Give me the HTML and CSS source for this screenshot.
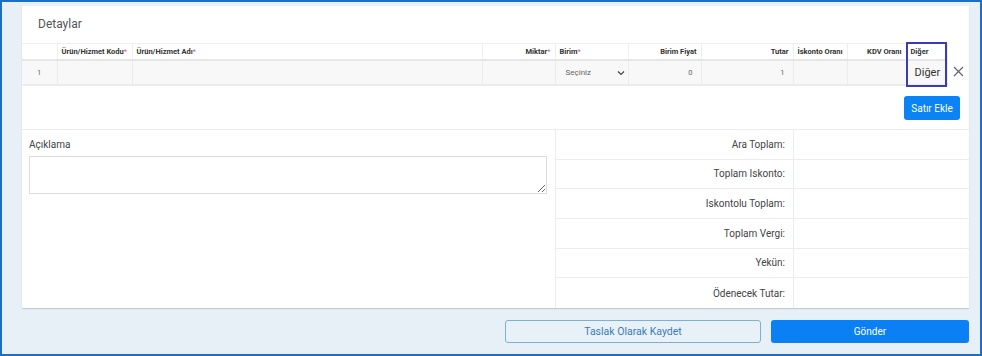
FILE: index.html
```html
<!DOCTYPE html>
<html lang="tr">
<head>
    <meta charset="UTF-8">
    <meta name="viewport" content="width=device-width, initial-scale=1.0">
    <title>Detaylar</title>
    <link rel="stylesheet" href="styles.css">
</head>
<body>

    <div class="frame">
        <div class="card">
            <div class="card-title">Detaylar</div>

            <div class="table-wrap">
                <table class="items">
                    <colgroup>
                        <col class="c-no">
                        <col class="c-code">
                        <col class="c-name">
                        <col class="c-qty">
                        <col class="c-unit">
                        <col class="c-price">
                        <col class="c-total">
                        <col class="c-disc">
                        <col class="c-vat">
                        <col class="c-other">
                        <col class="c-del">
                    </colgroup>
                    <thead>
                        <tr>
                            <th></th>
                            <th>Ürün/Hizmet Kodu<span class="req">*</span></th>
                            <th>Ürün/Hizmet Adı<span class="req">*</span></th>
                            <th class="right">Miktar<span class="req">*</span></th>
                            <th>Birim<span class="req">*</span></th>
                            <th class="right">Birim Fiyat</th>
                            <th class="right">Tutar</th>
                            <th>İskonto Oranı</th>
                            <th class="right">KDV Oranı</th>
                            <th>Diğer</th>
                            <th class="del"></th>
                        </tr>
                    </thead>
                    <tbody>
                        <tr>
                            <td class="no">1</td>
                            <td></td>
                            <td></td>
                            <td></td>
                            <td class="unit">
                                <div class="select">
                                    <span>Seçiniz</span>
                                    <svg width="8" height="6" viewBox="0 0 8 6"><path d="M1 1.5 L4 4.5 L7 1.5" fill="none" stroke="#444" stroke-width="1.2"/></svg>
                                </div>
                            </td>
                            <td class="right">0</td>
                            <td class="right">1</td>
                            <td></td>
                            <td></td>
                            <td class="other">Diğer</td>
                            <td class="del">
                                <svg width="11" height="11" viewBox="0 0 11 11"><path d="M1 1 L10 10 M10 1 L1 10" stroke="#666" stroke-width="1.2"/></svg>
                            </td>
                        </tr>
                    </tbody>
                </table>
                <div class="highlight"></div>
            </div>

            <div class="add-row">
                <button class="btn-add">Satır Ekle</button>
            </div>

            <div class="bottom">
                <div class="note">
                    <label for="note">Açıklama</label>
                    <textarea id="note"></textarea>
                </div>
                <div class="totals">
                    <div class="t-label">Ara Toplam:</div><div class="t-value"></div>
                    <div class="t-label">Toplam Iskonto:</div><div class="t-value"></div>
                    <div class="t-label">Iskontolu Toplam:</div><div class="t-value"></div>
                    <div class="t-label">Toplam Vergi:</div><div class="t-value"></div>
                    <div class="t-label">Yekün:</div><div class="t-value"></div>
                    <div class="t-label">Ödenecek Tutar:</div><div class="t-value"></div>
                </div>
            </div>
        </div>

        <div class="actions">
            <button class="btn-draft">Taslak Olarak Kaydet</button>
            <button class="btn-send">Gönder</button>
        </div>
    </div>

</body>
</html>
```

FILE: styles.css
```css
body {
    font-family: Roboto, "Liberation Sans", Arial, sans-serif;
    margin: 0;
    color: #333;
}
.frame {
    box-sizing: border-box;
    width: 982px;
    height: 356px;
    border: 2px solid #1b6fc4;
    background-color: #e7eff7;
    padding: 4px 11px 0 20px;
}
.card {
    background: white;
    width: 947px;
    height: 302px;
    box-shadow: 0 1px 1px rgba(0,0,0,0.15);
    display: flex;
    flex-direction: column;
}
.card-title {
    height: 37px;
    box-sizing: border-box;
    padding: 11px 0 0 16px;
    font-size: 12px;
    color: #555;
}
.table-wrap {
    position: relative;
}
.items {
    border-collapse: collapse;
    table-layout: fixed;
    width: 947px;
}
.c-no { width: 35px; }
.c-code { width: 75px; }
.c-name { width: 350px; }
.c-qty { width: 73px; }
.c-unit { width: 73px; }
.c-price { width: 73px; }
.c-total { width: 92px; }
.c-disc { width: 54px; }
.c-vat { width: 59px; }
.c-other { width: 41px; }
.c-del { width: 22px; }
.items th {
    height: 15px;
    padding: 0 4px;
    font-size: 7.5px;
    font-weight: 700;
    color: #333;
    text-align: left;
    white-space: nowrap;
    border: 1px solid #efefef;
    border-bottom: 2px solid #e6e6e6;
}
.items td {
    height: 23px;
    padding: 0 8px;
    font-size: 7.5px;
    color: #666;
    background: #f8f8f8;
    border: 1px solid #ececec;
    border-bottom: 2px solid #ececec;
}
.items th:first-child, .items td:first-child {
    border-left: none;
}
.items .right {
    text-align: right;
}
.items .no {
    padding-left: 15px;
}
.items td.unit {
    padding-right: 3px;
}
.items th.del, .items td.del {
    border: none;
    background: white;
    padding: 0;
    text-align: center;
}
.items td.other {
    font-size: 11px;
    color: #333;
    padding-left: 8px;
}
.req {
    color: #e4576a;
    font-weight: 400;
}
.select {
    display: flex;
    align-items: center;
    justify-content: space-between;
    font-size: 8px;
    color: #666;
    padding-left: 2px;
}
.highlight {
    position: absolute;
    left: 884px;
    top: -1px;
    width: 37px;
    height: 41px;
    border: 2px solid #3b3bb5;
}
.add-row {
    display: flex;
    justify-content: flex-end;
    padding: 10px 9px 0 0;
    height: 44px;
    box-sizing: border-box;
    border-bottom: 1px solid #ececec;
}
.btn-add {
    width: 56px;
    height: 24px;
    border: none;
    border-radius: 3px;
    background-color: #0b83f2;
    color: white;
    font-family: inherit;
    font-size: 10px;
    padding: 0;
}
.bottom {
    flex: 1;
    display: flex;
}
.note {
    width: 533px;
    box-sizing: border-box;
    padding: 9px 8px 0 7px;
}
.note label {
    display: block;
    font-size: 10px;
    color: #444;
    margin-bottom: 6px;
}
.note textarea {
    display: block;
    width: 518px;
    height: 38px;
    box-sizing: border-box;
    border: 1px solid #dcdcdc;
    resize: vertical;
    margin: 0;
}
.totals {
    flex: 1;
    display: grid;
    grid-template-columns: 238px 1fr;
    grid-template-rows: repeat(6, 1fr);
    border-left: 1px solid #ececec;
}
.t-label {
    display: flex;
    align-items: center;
    justify-content: flex-end;
    padding-right: 8px;
    font-size: 10px;
    color: #444;
    border-bottom: 1px solid #ececec;
    border-right: 1px solid #ececec;
}
.t-value {
    border-bottom: 1px solid #ececec;
}
.t-label:nth-last-child(2), .t-value:last-child {
    border-bottom: none;
}
.actions {
    display: flex;
    justify-content: flex-end;
    gap: 10px;
    margin-top: 12px;
}
.actions button {
    height: 23px;
    border-radius: 3px;
    font-family: inherit;
    font-size: 10px;
    padding: 0;
}
.btn-draft {
    width: 256px;
    background-color: #e8f1f8;
    border: 1px solid #7eafd6;
    color: #3a7bb8;
    font-size: 10.5px !important;
}
.btn-send {
    width: 198px;
    background-color: #0a80f4;
    border: none;
    color: white;
}
```
